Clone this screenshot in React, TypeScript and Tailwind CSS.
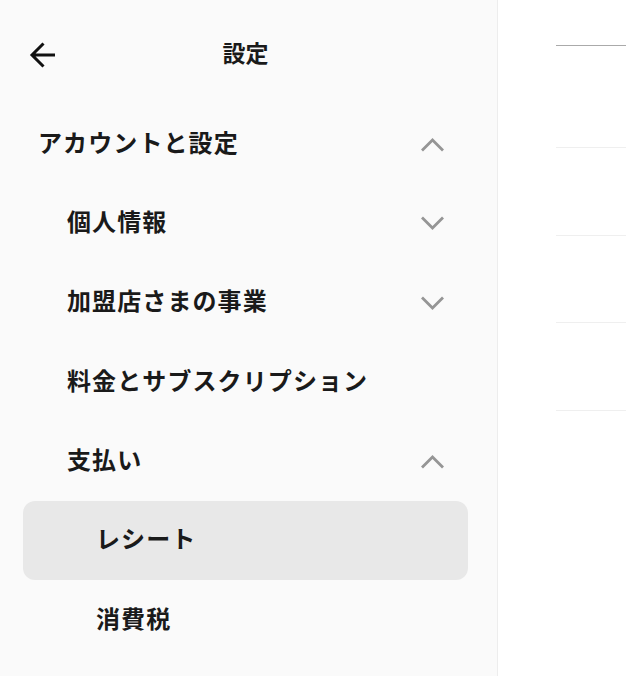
type NavItem = {
  label: string;
  level: 1 | 2 | 3;
  chevron?: "up" | "down";
  active?: boolean;
};

const items: NavItem[] = [
  { label: "アカウントと設定", level: 1, chevron: "up" },
  { label: "個人情報", level: 2, chevron: "down" },
  { label: "加盟店さまの事業", level: 2, chevron: "down" },
  { label: "料金とサブスクリプション", level: 2 },
  { label: "支払い", level: 2, chevron: "up" },
  { label: "レシート", level: 3, active: true },
  { label: "消費税", level: 3 },
];

function Chevron({ dir }: { dir: "up" | "down" }) {
  return (
    <svg width="25" height="15" viewBox="0 0 25 15" fill="none" className="mt-[2px] text-[#959595]">
      {dir === "up" ? (
        <path d="M2 13.5 L12.5 3 L23 13.5" stroke="currentColor" strokeWidth="2.8" />
      ) : (
        <path d="M2 1.5 L12.5 12 L23 1.5" stroke="currentColor" strokeWidth="2.8" />
      )}
    </svg>
  );
}

function BackArrow() {
  return (
    <svg width="28" height="28" viewBox="0 0 28 28" fill="none" className="text-[#111]">
      <path d="M26 14 H3.5 M14.5 2.5 L3 14 L14.5 25.5" stroke="currentColor" strokeWidth="3" />
    </svg>
  );
}

export default function App() {
  return (
    <div
      className="flex h-[676px] w-[626px] overflow-hidden bg-white text-[#1a1a1a]"
      style={{ fontFamily: '"Noto Sans CJK JP", "Noto Sans", sans-serif' }}
    >
      <aside className="w-[498px] shrink-0 border-r border-[#ededed] bg-[#fafafa] pl-[23px] pr-[29px]">
        <header className="relative flex h-[104px] items-center">
          <button className="absolute left-[6px] mt-[6px] flex items-center justify-center">
            <BackArrow />
          </button>
          <h1 className="w-full text-center text-[23px] font-bold">設定</h1>
        </header>

        <nav>
          {items.map((item) => (
            <div
              key={item.label}
              className={`flex h-[79.33px] items-center justify-between rounded-xl pr-[23px] ${
                item.active ? "bg-[#e8e8e8]" : ""
              } ${item.level === 1 ? "pl-[15px]" : item.level === 2 ? "pl-[44px]" : "pl-[73px]"}`}
            >
              <span className="mb-[4px] text-[24px] font-bold tracking-[1.1px]">{item.label}</span>
              {item.chevron && <Chevron dir={item.chevron} />}
            </div>
          ))}
        </nav>
      </aside>

      <main className="flex-1 pl-[58px] pt-[45px]">
        <div className="h-[102px] border-t border-[#aaa]" />
        <div className="h-[87.5px] border-t border-[#efefef]" />
        <div className="h-[87.5px] border-t border-[#efefef]" />
        <div className="h-[87.5px] border-t border-[#efefef]" />
        <div className="h-[87.5px] border-t border-[#efefef]" />
      </main>
    </div>
  );
}
